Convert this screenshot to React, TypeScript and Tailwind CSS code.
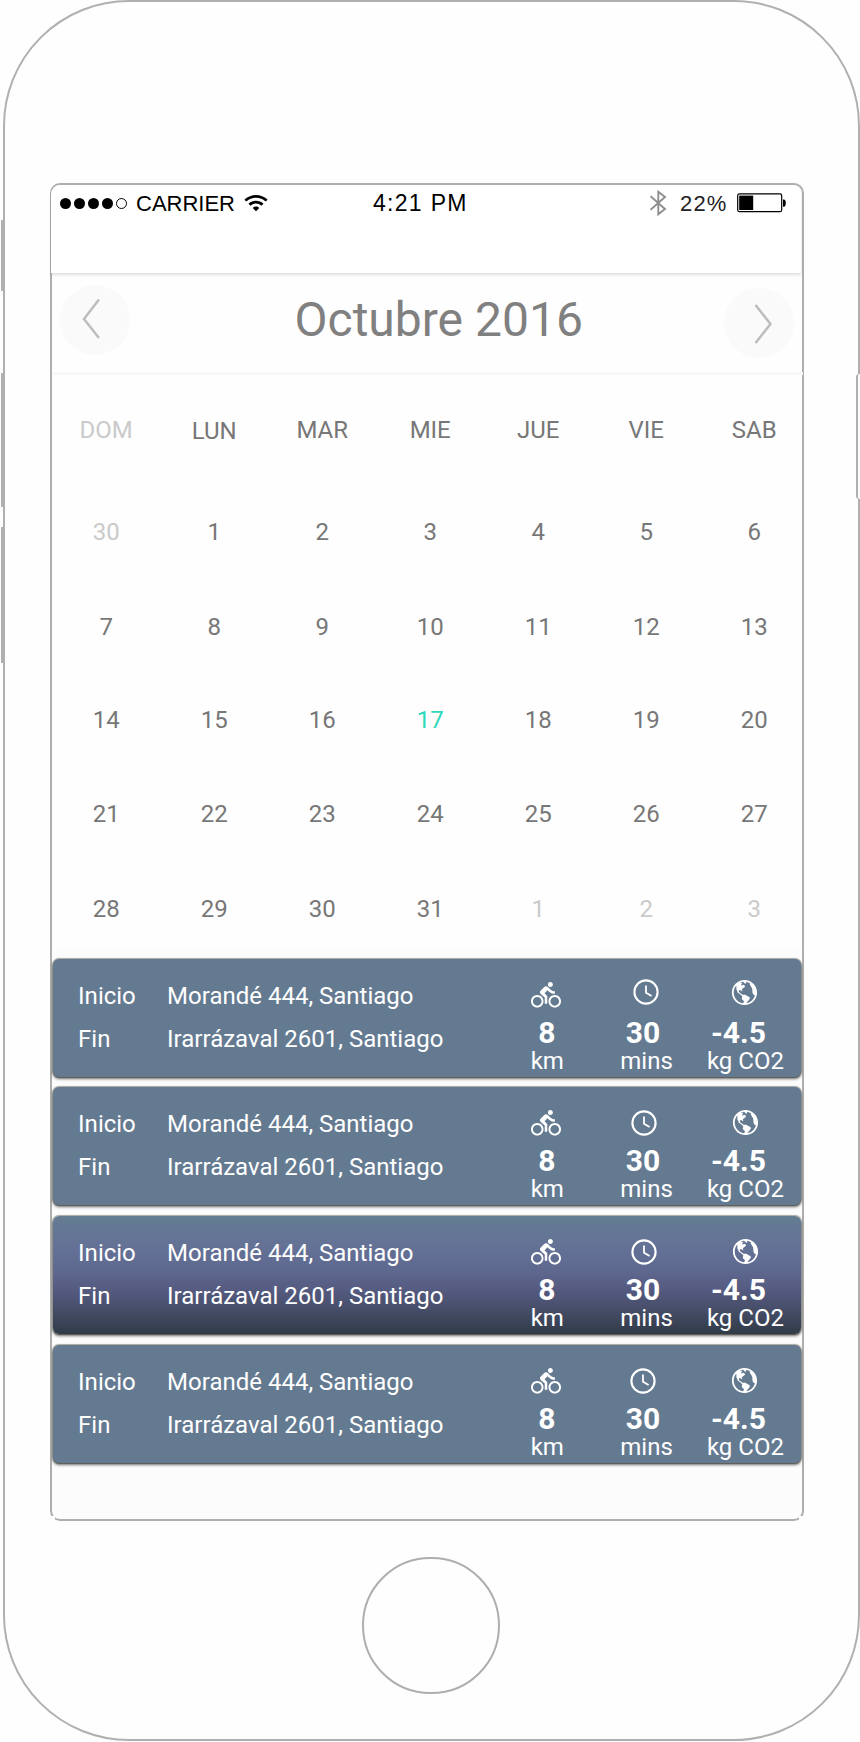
import { MdDirectionsBike } from "react-icons/md";
import { IoMdGlobe, IoIosWifi } from "react-icons/io";

type Day = { label: string; tone?: "muted" | "active" };

const weekdays = ["DOM", "LUN", "MAR", "MIE", "JUE", "VIE", "SAB"];

const range = (from: number, to: number): Day[] =>
  Array.from({ length: to - from + 1 }, (_, i) => ({ label: String(from + i) }));

const weeks: { height: string; days: Day[] }[] = [
  { height: "h-[94px] leading-[94px]", days: [{ label: "30", tone: "muted" }, ...range(1, 6)] },
  { height: "h-[95px] leading-[96px]", days: range(7, 13) },
  {
    height: "h-[94px] leading-[92px]",
    days: [...range(14, 16), { label: "17", tone: "active" }, ...range(18, 20)],
  },
  { height: "h-[94px] leading-[92px]", days: range(21, 27) },
  {
    height: "h-[87px] leading-[95px]",
    days: [
      ...range(28, 31),
      { label: "1", tone: "muted" },
      { label: "2", tone: "muted" },
      { label: "3", tone: "muted" },
    ],
  },
];

const toneClass = {
  muted: "text-[#cacaca]",
  active: "text-[#2ed9bb]",
  normal: "text-[#777777]",
};

type Trip = { card: string; clock: string; globe: string };

const plain = "bg-[#647a91]";
const selected =
  "bg-[linear-gradient(to_bottom,#647c91_0%,#647296_25%,#5f6990_45%,#555b81_62%,#464d67_80%,#303b47_100%)]";

const trips: Trip[] = [
  { card: plain, clock: "pt-[18px] pr-[2px]", globe: "pt-[18px] pr-[3px]" },
  { card: `mt-[10px] ${plain}`, clock: "pt-[21px] pr-[5px]", globe: "pt-[20px] pr-px" },
  { card: `mt-[11px] ${selected}`, clock: "pt-[21px] pr-[5px]", globe: "pt-[20px] pr-px" },
  { card: `mt-[11px] ${plain}`, clock: "pt-[21px] pr-[7px]", globe: "pt-[20px] pr-[3px]" },
];

function ClockIcon() {
  return (
    <svg width="30" height="30" viewBox="0 0 30 30" fill="none" stroke="#fff">
      <circle cx="15" cy="15" r="11.6" strokeWidth="2.1" />
      <path d="M15 8.6V15.7L20.6 19.1" strokeWidth="1.8" />
    </svg>
  );
}

function StatusBar() {
  return (
    <div className="flex h-9 items-center font-['Liberation_Sans',Arial,sans-serif] text-black">
      <div className="flex w-[321px] items-center pl-[9px]">
        <div className="flex gap-[3px]">
          {[0, 1, 2, 3].map((i) => (
            <span key={i} className="size-[11px] rounded-full bg-black" />
          ))}
          <span className="size-[11px] rounded-full border border-black" />
        </div>
        <span className="ml-[9px] w-[100px] pt-[2px] text-[22px] leading-6 whitespace-nowrap">
          CARRIER
        </span>
        <IoIosWifi className="ml-[7px] size-[26px]" />
      </div>
      <span className="flex-1 pl-px text-[23px] leading-6 tracking-[1.3px] whitespace-nowrap">4:21 PM</span>
      <div className="flex items-center pr-[14px]">
        <svg width="18" height="28" viewBox="0 0 18 28" fill="none" stroke="#8e8e8e" strokeWidth="1.9">
          <path d="M0.5 7.2L15 20L8.3 25.3V2.7L15 8L0.5 20.8" />
        </svg>
        <span className="ml-[12px] w-[49px] pt-[2px] text-[22px] leading-6 tracking-[1.2px] text-[#222]">
          22%
        </span>
        <svg className="ml-[8px]" width="50" height="20" viewBox="0 0 50 20">
          <rect x="0.7" y="0.9" width="44" height="17.8" rx="1.8" fill="none" stroke="#000" strokeWidth="1.2" />
          <rect x="2.2" y="2.6" width="14" height="14.4" fill="#000" />
          <path d="M46 6.5h.8a2 3.6 0 0 1 0 7.2H46z" fill="#000" />
        </svg>
      </div>
    </div>
  );
}

function Arrow({ side, points }: { side: string; points: string }) {
  return (
    <button className={`flex size-[70px] shrink-0 rounded-full bg-[#fafafa] ${side}`}>
      <svg width="70" height="70" viewBox="0 0 70 70" fill="none" stroke="#bdbdbd" strokeWidth="2.5">
        <polyline points={points} />
      </svg>
    </button>
  );
}

function TripCard({ card, clock, globe }: Trip) {
  return (
    <div
      className={`flex h-[118px] w-[748px] rounded-[6px] text-white shadow-[0_2px_3px_rgba(0,0,0,0.55),0_0_1px_1px_rgba(120,115,105,0.6)] ${card}`}
    >
      <div className="grid w-[445px] shrink-0 grid-cols-[89px_1fr] content-start pt-[16px] pl-[25.5px] text-2xl leading-[43px] whitespace-nowrap">
        <span>Inicio</span>
        <span>Morandé 444, Santiago</span>
        <span>Fin</span>
        <span>Irarrázaval 2601, Santiago</span>
      </div>
      <div className="grid w-[298px] shrink-0 grid-cols-3 grid-rows-[59px_30px_26px] justify-items-center whitespace-nowrap">
        <div className="pt-[21px] pr-[2px]">
          <MdDirectionsBike className="size-[30px]" />
        </div>
        <div className={clock}>
          <ClockIcon />
        </div>
        <div className={globe}>
          <IoMdGlobe className="size-[31px]" />
        </div>
        <b className="pr-px text-[30px] leading-[30px]">8</b>
        <b className="pr-[7px] text-[30px] leading-[30px]">30</b>
        <b className="pr-[15px] text-[30px] leading-[30px]">-4.5</b>
        <span className="text-2xl leading-[26px]">km</span>
        <span className="text-2xl leading-[26px]">mins</span>
        <span className="pr-px text-2xl leading-[26px]">kg CO2</span>
      </div>
    </div>
  );
}

export default function App() {
  return (
    <div className="relative h-[1742px] w-[860px] overflow-hidden bg-[#fefefe] pl-[3px] font-['Roboto',sans-serif]">
      <div className="flex h-[1741px] w-[857px] flex-col rounded-[126px] border-2 border-[#b0b0b0] pt-[181px] pl-[45px]">
        <div className="relative h-[1338px] w-[754px] rounded-[10px] border-2 border-[#aeaeae] bg-[#fcfcfc]">
          <header className="relative -ml-px h-[88px] w-[750px] rounded-t-[9px] bg-white shadow-[0_2px_3px_rgba(0,0,0,0.12)]">
            <StatusBar />
          </header>
          <div className="flex h-[99px] items-start bg-[#fefefe] px-2">
            <Arrow side="mt-[12px]" points="39,14.5 24,34 39,53" />
            <h1 className="mt-[17px] ml-[164.5px] text-5xl leading-[60px] whitespace-nowrap text-[#808080]">
              Octubre 2016
            </h1>
            <Arrow side="mt-[15px] ml-auto" points="31.5,17 46.5,36 31.5,55" />
          </div>
          <div className="relative ml-px h-[3px] w-[750px] bg-[#f8f8f8]" />
          <div className="h-[574px] bg-[#fefefe] pl-[0.2px] text-2xl">
            <div className="grid h-[110px] grid-cols-[repeat(7,108px)] text-center leading-[110px]">
              {weekdays.map((d) => (
                <span key={d} className={d === "DOM" ? toneClass.muted : d === "LUN" ? "pt-px text-[#777777]" : toneClass.normal}>
                  {d}
                </span>
              ))}
            </div>
            {weeks.map((week, i) => (
              <div key={i} className={`grid grid-cols-[repeat(7,108px)] text-center ${week.height}`}>
                {week.days.map((day, j) => (
                  <span key={j} className={toneClass[day.tone ?? "normal"]}>
                    {day.label}
                  </span>
                ))}
              </div>
            ))}
          </div>
          <div className="pt-[9.5px] pl-[0.6px]">
            {trips.map((trip, i) => (
              <TripCard key={i} {...trip} />
            ))}
          </div>
          <span className="absolute -bottom-[2px] -left-[2px] size-[5px] bg-[#fefefe]" />
          <span className="absolute -right-[2px] -bottom-[2px] size-[5px] bg-[#fefefe]" />
        </div>
        <div className="mt-[36px] ml-[312px] h-[137px] w-[138px] rounded-full border-2 border-[#aeaeae]" />
      </div>
      <span className="absolute top-[220px] left-px h-[71px] w-1 bg-[#b0b0b0]" />
      <span className="absolute top-[373px] left-px h-[134px] w-1 bg-[#b0b0b0]" />
      <span className="absolute top-[527px] left-px h-[136px] w-1 bg-[#b0b0b0]" />
      <span className="absolute top-[374px] right-0 h-[125px] w-1 rounded-l-[3px] border-l-2 border-[#b0b0b0] bg-[#fefefe]" />
    </div>
  );
}
